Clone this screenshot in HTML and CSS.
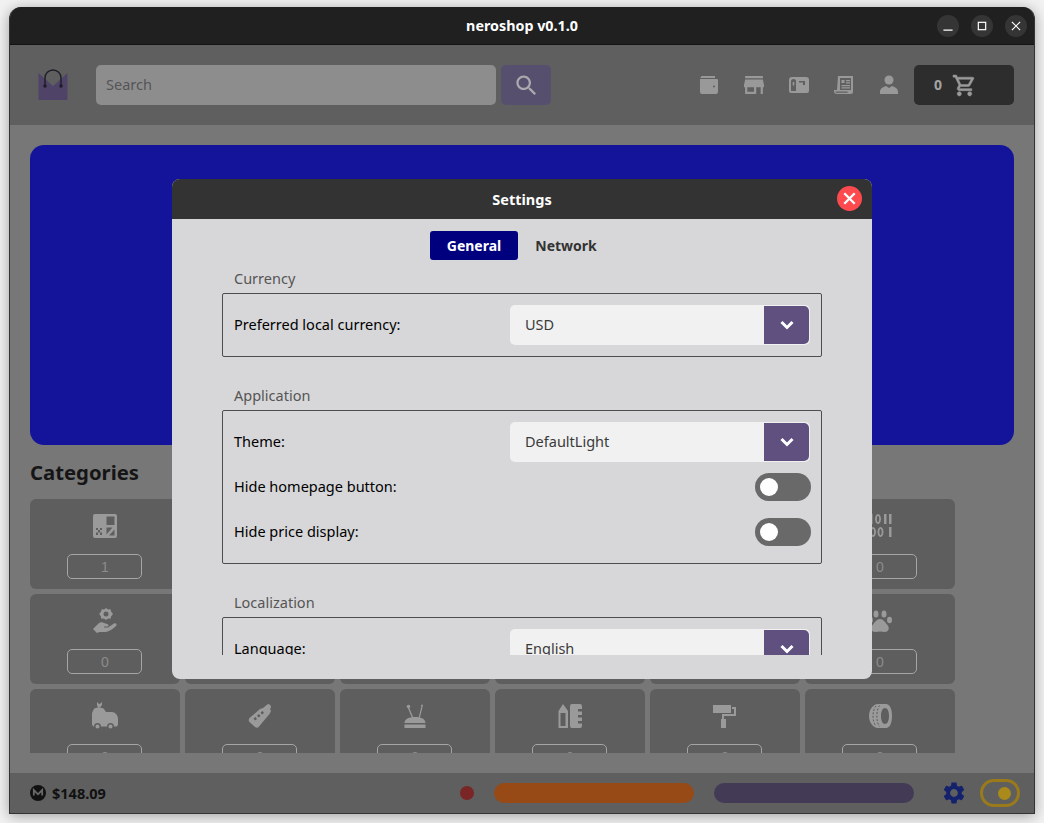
FILE: index.html
```html
<!DOCTYPE html>
<html lang="en">
<head>
    <meta charset="UTF-8">
    <title>neroshop v0.1.0</title>
    <link rel="stylesheet" href="styles.css">
</head>
<body>
<div class="window">
    <div class="titlebar">
        <span class="titlebar-name">neroshop v0.1.0</span>
        <div class="winbtns">
            <span class="winbtn"><svg viewBox="0 0 24 24"><path d="M7 16.5h10" /></svg></span>
            <span class="winbtn"><svg viewBox="0 0 24 24"><rect x="8" y="8" width="8" height="8" /></svg></span>
            <span class="winbtn"><svg viewBox="0 0 24 24"><path d="M7.5 7.5l9 9M16.5 7.500l-9 9" /></svg></span>
        </div>
    </div>

    <div class="topbar">
        <svg class="logo" viewBox="0 0 30 32">
            <path fill="#4f4468" d="M.5 4L15 17 29.5 4v26a1 1 0 0 1-1 1h-27a1 1 0 0 1-1-1z" />
            <path fill="none" stroke="#1f1d26" stroke-width="1.4" d="M7 17V9a8 8 0 0 1 16 0v8" />
            <circle cx="7" cy="17" r="1.8" fill="#1f1d26" />
            <circle cx="23" cy="17" r="1.8" fill="#1f1d26" />
        </svg>
        <div class="search-input">Search</div>
        <div class="search-btn">
            <svg viewBox="0 0 24 24"><path d="M15.5 14h-.79l-.28-.27C15.41 12.59 16 11.11 16 9.5 16 5.91 13.09 3 9.5 3S3 5.91 3 9.5 5.91 16 9.5 16c1.61 0 3.09-.59 4.23-1.57l.27.28v.79l5 4.99L20.49 19l-4.99-5zm-6 0C7.01 14 5 11.99 5 9.5S7.01 5 9.5 5 14 7.01 14 9.5 11.99 14 9.5 14z" /></svg>
        </div>
        <div class="nav-icons">
            <svg viewBox="0 0 20 20"><path fill-rule="evenodd" d="M3 1h13v2H1.500C1.500 2 2 1 3 1zM1 4h17a1 1 0 0 1 1 1v12a2 2 0 0 1-2 2H3a2 2 0 0 1-2-2zm14 6.500a1 1 0 1 0 0 2 1 1 0 0 0 0-2z" /></svg>
            <svg viewBox="3 3.500 18 17"><path d="M20 4H4v2h16V4zm1 10v-2l-1-5H4l-1 5v2h1v6h10v-6h4v6h2v-6h1zm-9 4H6v-4h6v4z" /></svg>
            <svg viewBox="0 0 20 20"><path fill-rule="evenodd" d="M3 2h14a3 3 0 0 1 3 3v11a2 2 0 0 1-2 2H2a2 2 0 0 1-2-2V5a3 3 0 0 1 3-3zm1.500 2A2.500 2.500 0 0 0 2 6.500V16h5V6.500A2.500 2.500 0 0 0 4.500 4zM10 6v1.500h4V10h2V6zM3.700 7h1.600v3.500H3.700z" /></svg>
            <svg viewBox="0 0 20 20"><path fill-rule="evenodd" d="M4 1h15v16a2 2 0 0 1-2 2H3a3 3 0 0 1-3-3v-1h3zm2 2v12h11V3zM1.500 16.500c0 .8.700 1.300 1.500 1.300h11c-.4-.4-.6-.8-.6-1.300zM7.500 5h3v3h-3zm4.500 0h4v1.200h-4zm0 2.300h4v1.200h-4zM7.500 10h8.500v1.200H7.500zm0 2.300h8.500v1.200H7.500z" /></svg>
            <svg viewBox="0 0 20 20"><circle cx="10" cy="5" r="4.500" /><path d="M1 19v-2.500C1 13.500 5 11.500 7 11l3 2 3-2c2 .5 6 2.500 6 5.500V19z" /></svg>
        </div>
        <div class="cart">
            <span class="cart-count">0</span>
            <svg viewBox="0 0 24 24"><path d="M15.550 13c.75 0 1.410-.41 1.750-1.030l3.580-6.490c.37-.66-.11-1.480-.87-1.480H5.210l-.94-2H1v2h2l3.600 7.590-1.350 2.440C4.520 15.370 5.480 17 7 17h12v-2H7l1.100-2h7.450zM6.160 6h12.150l-2.760 5H8.530L6.160 6zM7 18c-1.100 0-1.990.9-1.990 2S5.900 22 7 22s2-.9 2-2-.9-2-2-2zm10 0c-1.100 0-1.990.9-1.990 2s.89 2 1.990 2 2-.9 2-2-.9-2-2-2z" /></svg>
        </div>
    </div>

    <div class="main">
        <div class="hero"></div>
        <h2 class="main-title">Categories</h2>
        <div class="cat-grid">
            <div class="cat-card">
                <svg viewBox="0 0 24 24"><path fill-rule="evenodd" d="M2 0h20a2 2 0 0 1 2 2v20a2 2 0 0 1-2 2H2a2 2 0 0 1-2-2V2a2 2 0 0 1 2-2zm11.500 2.500V11h8V2.500zM3 14v2h2v-2zm4 0v2h2v-2zm-2 2v2.500h2V16zm-2 2.500V21h2v-2.500zm4 0V21h2v-2.500zm6.500-5v7l6-7zm8 2l-5.500 6h5.500z" /></svg>
                <span class="cat-count">1</span>
            </div>
            <div class="cat-card"></div>
            <div class="cat-card"></div>
            <div class="cat-card"></div>
            <div class="cat-card"></div>
            <div class="cat-card">
                <svg viewBox="0 0 24 24"><path fill-rule="evenodd" d="M2 0h2.500v10H2zM16 0h2.500v10H16zM21 0h2.500v10H21zM10 0a3 5 0 1 0 .01 0zm0 1.800a1.200 3.200 0 1 1-.01 0zM5 13a3 5 0 1 0 .01 0zm0 1.800a1.200 3.200 0 1 1-.01 0zM12.500 13a3 5 0 1 0 .01 0zm0 1.800a1.200 3.200 0 1 1-.01 0zM21 13h2.500v10H21z" /></svg>
                <span class="cat-count">0</span>
            </div>

            <div class="cat-card">
                <svg viewBox="0 0 24 24"><path fill-rule="evenodd" d="M13-1l2 1.500 2.500-.2.7 2.400L20 5l-1.800 2.300-.7 2.400-2.500-.2-2 1.500-2-1.500-2.500.2-.7-2.400L6.200 5 8 2.700l.7-2.400 2.500.2zM13 2.500a2.500 2.500 0 1 0 0 5 2.500 2.500 0 0 0 0-5z" /><path d="M0 20l5-5c2-2 4-2 6-1l3 1c2 .5 2 2.500 0 2.500h-3v1h4l6-4c2-1 3.500 1 2 2.500-3 3-6 5-10 6H6.500L4 24z" /></svg>
                <span class="cat-count">0</span>
            </div>
            <div class="cat-card"></div>
            <div class="cat-card"></div>
            <div class="cat-card"></div>
            <div class="cat-card"></div>
            <div class="cat-card">
                <svg viewBox="0 0 24 24"><ellipse cx="2.500" cy="11" rx="2.500" ry="3.200" /><ellipse cx="8" cy="5" rx="2.500" ry="3.500" /><ellipse cx="16" cy="5" rx="2.500" ry="3.500" /><ellipse cx="21.500" cy="11" rx="2.500" ry="3.200" /><path d="M12 10c3 0 5 3 7.500 6 2.500 3.500 1 7-3 7-1.500 0-3-.5-4.500-.5s-3 .5-4.500.5c-4 0-5.500-3.500-3-7C7 13 9 10 12 10z" /></svg>
                <span class="cat-count">0</span>
            </div>

            <div class="cat-card">
                <svg viewBox="0 0 24 24"><path d="M4-2l2.500 2.300L9-2v3L7 3.500H5L4 1z" /><circle cx="4.500" cy="22.500" r="2" /><circle cx="17.500" cy="22.500" r="2" /><path d="M1 5c1-2 8-2 10 0l2 3h6c3 0 6 3 6 7v5c0 2-1 2.500-2 2.500h-2a3.500 3.500 0 0 0-7 0H8a3.500 3.500 0 0 0-7 0c-1 0-2-1-2-2.500V10c0-2 1-3 2-5z" /></svg>
                <span class="cat-count">0</span>
            </div>
            <div class="cat-card">
                <svg viewBox="0 0 24 24"><path fill-rule="evenodd" d="M15 4l3-2.500L20 0l2.500 1 .5 2.500L22 5l1 2-1.500 3L11 22.500c-1 1.500-2.500 1.500-4 .5l-5.500-5c-1-1-1-2.500 0-4L12 5zM5.500 14.500l2-1.500 1.500 2-2 1.500zm3.500-3l2-1.500 1.500 2-2 1.500zm3.500-3l2-1.500 1.500 2-2 1.500z" /></svg>
                <span class="cat-count">0</span>
            </div>
            <div class="cat-card">
                <svg viewBox="0 0 24 24"><circle cx="5.500" cy="2.500" r="1.800" /><circle cx="19" cy="1.500" r="1" /><path d="M4.800 4l1.400-.3L10.500 14l-1.200.4zM18.500 2l1.200.2-3 12-1.200-.3z" /><path d="M1.500 19c0-4 4.500-6 10.500-6s10.500 2 10.500 6zM1.500 20.500h21V24h-21z" /></svg>
                <span class="cat-count">0</span>
            </div>
            <div class="cat-card">
                <svg viewBox="0 0 24 24"><path fill-rule="evenodd" d="M5 0l5 7v17H.5V7zM2.500 9v13h5V9zM14 0h8a2 2 0 0 1 2 2v3h-4v2.500h4V11h-4v2.500h4V17h-4v2.500h4V22a2 2 0 0 1-2 2h-8a2 2 0 0 1-2-2V2a2 2 0 0 1 2-2z" /></svg>
                <span class="cat-count">0</span>
            </div>
            <div class="cat-card">
                <svg viewBox="0 0 24 24"><path d="M0 1h18v8H0zM19 3h4v9H11v3H9v-5h12V5h-2zM8 15h5v9H8z" /></svg>
                <span class="cat-count">0</span>
            </div>
            <div class="cat-card">
                <svg viewBox="0 0 24 24"><path fill-rule="evenodd" d="M10 0h8c4 0 6 5.500 6 12s-2 12-6 12h-8C5 24 1 18 1 12S5 0 10 0zm7 4c-2.500 0-4 3.500-4 8s1.500 8 4 8 4-3.500 4-8-1.500-8-4-8z" /><path class="tread" d="M8 2C4 6 4 18 8 22M11.500 1.500C8 6 8 18 11.500 22.500" /></svg>
                <span class="cat-count">0</span>
            </div>
        </div>
    </div>

    <div class="statusbar">
        <div class="price">
            <svg viewBox="0 0 16 16"><circle cx="8" cy="8" r="8" fill="#111" /><path fill="none" stroke="#68686a" stroke-width="1.800" d="M3.800 10.500V5L8 9.300 12.200 5v5.500" /></svg>
            <span>$148.09</span>
        </div>
        <span class="status-dot"></span>
        <span class="status-bar status-bar-orange"></span>
        <span class="status-bar status-bar-purple"></span>
        <svg class="gear" viewBox="0 0 24 24"><path d="M19.140 12.940c.04-.3.060-.61.060-.94 0-.32-.02-.64-.07-.94l2.030-1.580c.18-.14.230-.41.120-.61l-1.920-3.320c-.12-.22-.37-.29-.59-.22l-2.390.96c-.5-.38-1.030-.7-1.620-.94l-.36-2.540c-.04-.24-.24-.41-.48-.41h-3.840c-.24 0-.43.170-.47.410l-.36 2.540c-.59.240-1.130.57-1.620.94l-2.390-.96c-.22-.08-.47 0-.59.220L2.740 8.870c-.12.210-.08.470.12.610l2.030 1.580c-.05.3-.09.630-.09.940s.02.640.07.940l-2.030 1.580c-.18.140-.23.410-.12.610l1.920 3.320c.12.220.37.290.59.220l2.390-.96c.5.380 1.030.7 1.620.94l.36 2.540c.05.240.24.410.48.410h3.840c.24 0 .44-.17.470-.41l.36-2.540c.59-.24 1.130-.56 1.620-.94l2.390.96c.22.080.47 0 .59-.22l1.920-3.320c.12-.22.070-.47-.12-.61l-2.010-1.580zM12 15.600c-1.980 0-3.600-1.620-3.600-3.600s1.620-3.600 3.600-3.600 3.600 1.620 3.600 3.600-1.620 3.600-3.600 3.600z" /></svg>
        <span class="theme-toggle"><span class="theme-knob"></span></span>
    </div>

    <div class="modal">
        <div class="modal-head">
            <span>Settings</span>
            <span class="modal-close"><svg viewBox="0 0 24 24"><path d="M7 7l10 10M17 7L7 17" /></svg></span>
        </div>
        <div class="tabs">
            <span class="tab tab-active">General</span>
            <span class="tab">Network</span>
        </div>
        <div class="modal-body">
            <div class="group-label">Currency</div>
            <div class="group group-currency">
                <div class="row">
                    <span class="row-text">Preferred local currency:</span>
                    <div class="select"><span class="select-value">USD</span><span class="select-arrow"><svg viewBox="0 0 16 16"><path d="M2.500 5L8 10.500 13.500 5" /></svg></span></div>
                </div>
            </div>
            <div class="group-label">Application</div>
            <div class="group group-app">
                <div class="row">
                    <span class="row-text">Theme:</span>
                    <div class="select"><span class="select-value">DefaultLight</span><span class="select-arrow"><svg viewBox="0 0 16 16"><path d="M2.500 5L8 10.500 13.500 5" /></svg></span></div>
                </div>
                <div class="row row-switch">
                    <span class="row-text">Hide homepage button:</span>
                    <span class="switch"><span class="switch-knob"></span></span>
                </div>
                <div class="row row-switch">
                    <span class="row-text">Hide price display:</span>
                    <span class="switch"><span class="switch-knob"></span></span>
                </div>
            </div>
            <div class="group-label">Localization</div>
            <div class="group">
                <div class="row">
                    <span class="row-text">Language:</span>
                    <div class="select"><span class="select-value">English</span><span class="select-arrow"><svg viewBox="0 0 16 16"><path d="M2.500 5L8 10.500 13.500 5" /></svg></span></div>
                </div>
            </div>
        </div>
    </div>
</div>
</body>
</html>
```
FILE: styles.css
```css
html, body {
    margin: 0;
    height: 100%;
    overflow: hidden;
}

body {
    background: #f2f2f2;
    font-family: "Noto Sans", "Open Sans", sans-serif;
    font-size: 14px;
    color: #000;
}

.window {
    position: relative;
    width: 1026px;
    height: 807px;
    margin: 7px 0 0 9px;
    border-radius: 12px 12px 0 0;
    box-sizing: border-box;
    border: 1px solid #333;
    border-top: 0;
    background: #777778;
    box-shadow: 0 2px 14px rgba(0, 0, 0, .35);
    display: flex;
    flex-direction: column;
    overflow: hidden;
}

.titlebar {
    height: 38px;
    flex: none;
    box-sizing: border-box;
    border-bottom: 1px solid #141414;
    background: #202020;
    color: #fff;
    display: flex;
    align-items: center;
    justify-content: center;
    position: relative;
}

.titlebar-name {
    font-weight: 700;
    font-size: 14.3px;
}

.winbtns {
    position: absolute;
    right: 7px;
    top: 8px;
    display: flex;
    gap: 12px;
}

.winbtn {
    width: 22px;
    height: 22px;
    border-radius: 50%;
    background: #353535;
}

.winbtn svg {
    display: block;
    width: 22px;
    height: 22px;
    fill: none;
    stroke: #fff;
    stroke-width: 1.3;
}

.topbar {
    height: 80px;
    flex: none;
    background: #5f5f60;
    display: flex;
    align-items: center;
    padding: 0 20px 0 28px;
    box-sizing: border-box;
}

.logo {
    width: 30px;
    height: 32px;
    margin-right: 28px;
}

.search-input {
    width: 400px;
    height: 40px;
    box-sizing: border-box;
    padding-left: 10px;
    line-height: 38px;
    background: #8d8d8d;
    border-radius: 5px;
    color: #555558;
    font-size: 14.5px;
}

.search-btn {
    width: 50px;
    height: 40px;
    margin-left: 5px;
    background: #56506e;
    border-radius: 5px;
    display: flex;
    align-items: center;
    justify-content: center;
}

.search-btn svg {
    width: 27px;
    height: 27px;
    fill: #a9a9ae;
}

.nav-icons {
    margin-left: auto;
    display: flex;
    align-items: center;
    gap: 25px;
}

.nav-icons svg {
    display: block;
    width: 20px;
    height: 20px;
    fill: #999;
}

.cart {
    width: 100px;
    height: 40px;
    margin-left: 15px;
    background: #2d2d2d;
    border-radius: 5px;
    display: flex;
    align-items: center;
    padding-left: 20px;
    box-sizing: border-box;
    gap: 10px;
}

.cart-count {
    color: #a3a3a3;
    font-weight: 700;
    padding-bottom: 2px;
}

.cart svg {
    width: 25px;
    height: 25px;
    fill: #9a9a9a;
    stroke: #9a9a9a;
    stroke-width: .5;
}

.main {
    flex: 1;
    min-height: 0;
    padding: 20px 20px 0 20px;
    box-sizing: border-box;
    display: flex;
    flex-direction: column;
}

.hero {
    height: 300px;
    flex: none;
    background: #14149a;
    border-radius: 14px;
}

.main-title {
    margin: 13px 0 13px;
    font-size: 20.3px;
    line-height: 28px;
    font-weight: 700;
    color: #151515;
}

.cat-grid {
    height: 254px;
    display: grid;
    grid-template-columns: repeat(6, 150px);
    grid-auto-rows: 90px;
    gap: 5px;
    overflow: hidden;
    margin-bottom: 20px;
}

.cat-card {
    background: #5e5e5f;
    border-radius: 6px;
    display: flex;
    flex-direction: column;
    align-items: center;
    padding-top: 14px;
    box-sizing: border-box;
}

.cat-card svg {
    width: 24px;
    height: 26px;
    fill: #9a9a9a;
    overflow: visible;
}

.cat-card .tread {
    fill: none;
    stroke: #5e5e5f;
    stroke-width: 1;
    stroke-dasharray: 2 1.5;
}

.cat-count {
    width: 75px;
    height: 25px;
    box-sizing: border-box;
    margin-top: auto;
    margin-right: 1px;
    margin-bottom: 10px;
    padding-left: 1px;
    border: 1px solid #a5a5a5;
    border-radius: 5px;
    text-align: center;
    line-height: 25px;
    color: #8b8b8b;
    font-family: "Liberation Sans", sans-serif;
    font-size: 14px;
}

.statusbar {
    height: 40px;
    flex: none;
    background: #5f5f60;
    display: flex;
    align-items: center;
    padding-left: 20px;
    box-sizing: border-box;
}

.statusbar > * {
    flex: none;
}

.price {
    display: flex;
    align-items: center;
    gap: 6px;
    width: 430px;
    font-weight: 700;
    font-size: 14.5px;
    color: #111;
}

.price svg {
    width: 16px;
    height: 16px;
}

.status-dot {
    width: 14px;
    height: 14px;
    border-radius: 50%;
    background: #7a2626;
    margin-right: 20px;
}

.status-bar {
    width: 200px;
    height: 20px;
    border-radius: 10px;
}

.status-bar-orange {
    background: #974916;
}

.status-bar-purple {
    margin-left: 20px;
    background: #433b55;
}

.gear {
    width: 26px;
    height: 26px;
    fill: #14216c;
    margin-left: 27px;
}

.theme-toggle {
    width: 40px;
    height: 28px;
    box-sizing: border-box;
    border: 3px solid #9a7a1a;
    border-radius: 14px;
    margin-left: 13px;
    display: flex;
    align-items: center;
    justify-content: flex-end;
    padding-right: 6px;
}

.theme-knob {
    width: 13px;
    height: 13px;
    border-radius: 50%;
    background: #a98a1a;
}

/* settings popup sits over the dimmed page */
.modal {
    position: absolute;
    left: 162px;
    top: 172px;
    width: 700px;
    height: 500px;
    background: #d7d7d9;
    border-radius: 8px;
    overflow: hidden;
    display: flex;
    flex-direction: column;
    font-size: 14.5px;
}

.modal-head {
    position: relative;
    height: 40px;
    flex: none;
    background: #333;
    color: #fff;
    font-weight: 700;
    display: flex;
    align-items: center;
    justify-content: center;
}

.modal-close {
    position: absolute;
    right: 10px;
    top: 7px;
    width: 25px;
    height: 25px;
    border-radius: 50%;
    background: #fc4a4f;
}

.modal-close svg {
    display: block;
    fill: none;
    stroke: #fff;
    stroke-width: 2.2;
}

.tabs {
    flex: none;
    display: flex;
    justify-content: center;
    gap: 4px;
    padding-right: 4px;
    margin-top: 12px;
    height: 29px;
}

.tab {
    width: 88px;
    height: 29px;
    line-height: 30px;
    text-align: center;
    font-size: 14px;
    font-weight: 700;
    border-radius: 3px;
    color: #333;
}

.tab-active {
    background: #00007f;
    color: #fff;
}

.modal-body {
    height: 395px;
    flex: none;
    margin: 0 50px;
    overflow: hidden;
    padding-top: 9px;
    box-sizing: border-box;
}

.group-label {
    height: 20px;
    line-height: 18px;
    padding-left: 12px;
    color: #555;
    margin-bottom: 4px;
}

.group {
    box-sizing: border-box;
    border: 1px solid #4d4d4d;
    border-radius: 2px;
    padding: 11px;
    margin-bottom: 29px;
}

.group-currency {
    height: 64px;
}

.group-app {
    height: 154px;
}

.group-app .row:first-child {
    margin-bottom: 2px;
}

.row {
    display: flex;
    align-items: center;
    justify-content: space-between;
    height: 40px;
}

.row-text {
    padding-bottom: 2px;
}

.row-switch {
    height: 45px;
}

.row-switch .switch {
    margin-right: -1px;
}

.select {
    width: 300px;
    height: 40px;
    border-radius: 5px;
    background: #f1f1f1;
    display: flex;
    color: #3a3a3a;
    overflow: hidden;
}

.select-value {
    flex: 1;
    padding-left: 15px;
    line-height: 38px;
}

.select-arrow {
    width: 45px;
    height: 38px;
    margin: 1px 1px 0 0;
    background: #5f5080;
    border-radius: 0 5px 5px 0;
    display: flex;
    align-items: center;
    justify-content: center;
}

.select-arrow svg {
    width: 16px;
    height: 16px;
    fill: none;
    stroke: #fff;
    stroke-width: 3;
}

.switch {
    width: 56px;
    height: 28px;
    border-radius: 14px;
    background: #696969;
    display: flex;
    align-items: center;
    padding-left: 5px;
    box-sizing: border-box;
}

.switch-knob {
    width: 18px;
    height: 18px;
    border-radius: 50%;
    background: #fff;
}
```
